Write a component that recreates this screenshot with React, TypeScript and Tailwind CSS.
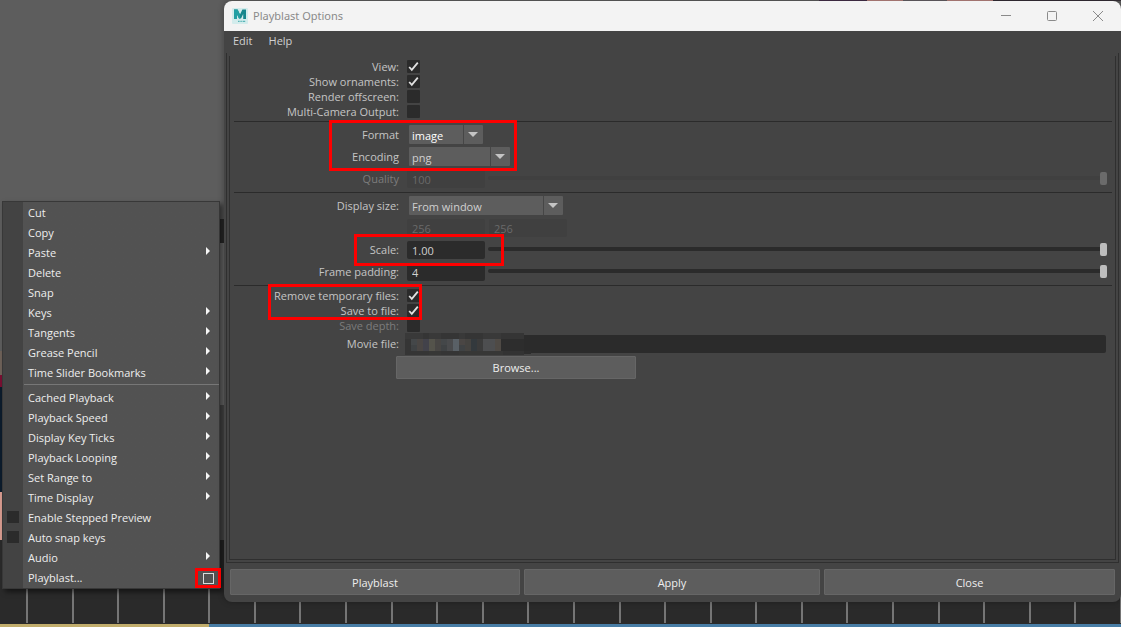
import { useState } from "react";
import type { ReactNode } from "react";

type MenuEntry = {
  label: string;
  submenu?: boolean;
  checkbox?: boolean;
  optionBox?: boolean;
};

const editItems: MenuEntry[] = [
  { label: "Cut" },
  { label: "Copy" },
  { label: "Paste", submenu: true },
  { label: "Delete" },
  { label: "Snap" },
  { label: "Keys", submenu: true },
  { label: "Tangents", submenu: true },
  { label: "Grease Pencil", submenu: true },
  { label: "Time Slider Bookmarks", submenu: true },
];

const playbackItems: MenuEntry[] = [
  { label: "Cached Playback", submenu: true },
  { label: "Playback Speed", submenu: true },
  { label: "Display Key Ticks", submenu: true },
  { label: "Playback Looping", submenu: true },
  { label: "Set Range to", submenu: true },
  { label: "Time Display", submenu: true },
  { label: "Enable Stepped Preview", checkbox: true },
  { label: "Auto snap keys", checkbox: true },
  { label: "Audio", submenu: true },
  { label: "Playblast...", optionBox: true },
];

const ticks = Array.from({ length: 25 }, (_, i) => i);

const MayaIcon = () => (
  <svg viewBox="0 0 16 16" className="w-4 h-4 shrink-0" aria-hidden="true">
    <rect width="16" height="16" rx="1" fill="#d3ecec" />
    <path d="M2 1.5h3.6L8 6.6l2.4-5.1H14v9.6h-2.8V6L9 10.6H7L4.8 6v5.1H2z" fill="#16868c" />
    <path d="M2 1.5h3.6L8 6.6v4H7L4.8 6v5.1H2z" fill="#23a0a4" />
    <path d="M6 13.4h1.6M8.4 13.4h1.4M10.6 13.4h2.6" stroke="#58b4b6" strokeWidth="1.4" />
  </svg>
);

const MenuItem = ({ item }: { item: MenuEntry }) => (
  <li className="relative flex h-5">
    {item.checkbox ? (
      <label className="flex flex-1 items-center">
        <input
          type="checkbox"
          className="appearance-none w-3 h-3 ml-1 mr-[9px] mb-0.5 bg-[#2b2b2b] checked:bg-[#5285a6]"
        />
        {item.label}
      </label>
    ) : (
      <button className="flex flex-1 items-center pl-[25px] text-left hover:bg-[#5285a6]">
        {item.label}
      </button>
    )}
    {item.submenu && (
      <svg viewBox="0 0 4 8" className="absolute right-[9px] top-1 w-1 h-2" aria-hidden="true">
        <path d="M0 0l4 4-4 4z" fill="#f5f5f5" />
      </svg>
    )}
    {item.optionBox && (
      <button
        aria-label="Playblast options"
        className="absolute -right-0.5 top-0 flex w-[26px] h-5 items-center justify-center border-[3px] border-[#fe0000]"
      >
        <span className="w-[11px] h-[11px] border border-[#dcdcdc]" />
      </button>
    )}
  </li>
);

const ContextMenu = () => (
  <div className="absolute left-0.5 bottom-[38px] w-[218px] border border-[#383838] pt-px text-[#eeeeee] shadow-[3px_3px_5px_rgba(0,0,0,0.5)] bg-linear-to-r from-[#434343] from-[20px] to-[#525252] to-[20px]">
    <ul>
      {editItems.map((item) => (
        <MenuItem key={item.label} item={item} />
      ))}
    </ul>
    <hr className="mt-px mb-[3px] ml-[21px] border-[#777777]" />
    <ul>
      {playbackItems.map((item) => (
        <MenuItem key={item.label} item={item} />
      ))}
    </ul>
  </div>
);

const Row = ({
  label,
  htmlFor,
  dim,
  children,
}: {
  label: string;
  htmlFor?: string;
  dim?: boolean;
  children: ReactNode;
}) => (
  <div className="flex h-[19px] items-center gap-2">
    <label
      htmlFor={htmlFor}
      className={`w-[165px] shrink-0 text-right ${dim ? "text-[#7c7c7c]" : "text-[#c4c4c4]"}`}
    >
      {label}
    </label>
    {children}
  </div>
);

const CheckRow = ({
  id,
  label,
  checked = false,
  disabled,
}: {
  id: string;
  label: string;
  checked?: boolean;
  disabled?: boolean;
}) => (
  <div className="flex h-[15px] gap-2">
    <label
      htmlFor={id}
      className={`w-[165px] shrink-0 text-right leading-[13px] ${
        disabled ? "text-[#7c7c7c]" : "text-[#c4c4c4]"
      }`}
    >
      {label}
    </label>
    <span className="grid w-[13px] h-[13px]">
      <input
        id={id}
        type="checkbox"
        defaultChecked={checked}
        disabled={disabled}
        className="peer appearance-none col-start-1 row-start-1 rounded-[1px] bg-[#2b2b2b]"
      />
      <svg
        viewBox="0 0 13 13"
        className="hidden peer-checked:block col-start-1 row-start-1 pointer-events-none"
        aria-hidden="true"
      >
        <path d="M2.2 7l2.6 2.8 6-7.2" fill="none" stroke="#e0e0e0" strokeWidth="1.8" />
      </svg>
    </span>
  </div>
);

const Combo = ({
  id,
  options,
  width,
  active,
}: {
  id: string;
  options: string[];
  width: string;
  active?: boolean;
}) => (
  <span className={`grid h-[19px] ml-0.5 ${width}`}>
    <select
      id={id}
      className={`appearance-none col-start-1 row-start-1 rounded-[1px] bg-[#5d5d5d] pl-[3px] pt-0.5 ${
        active ? "text-white" : "text-[#d0d0d0]"
      }`}
    >
      {options.map((option) => (
        <option key={option}>{option}</option>
      ))}
    </select>
    <span className="col-start-1 row-start-1 justify-self-end flex w-5 items-center justify-center border-l border-[#464646] pr-px pointer-events-none">
      <svg viewBox="0 0 10 5" className="w-2.5 h-[5px]" aria-hidden="true">
        <path d="M0 0h10L5 5z" fill="#c4c4c4" />
      </svg>
    </span>
  </span>
);

const NumberField = ({
  id,
  value,
  disabled,
  name,
}: {
  id: string;
  value: string;
  disabled?: boolean;
  name?: string;
}) => (
  <input
    id={id}
    type="text"
    aria-label={name}
    defaultValue={value}
    disabled={disabled}
    className="w-[78px] h-[18px] shrink-0 rounded-[2px] bg-[#2b2b2b] pl-[5px] pt-0.5 text-[#d0d0d0] disabled:bg-[#404040] disabled:text-[#6a6a6a]"
  />
);

const Slider = ({ name, disabled }: { name: string; disabled?: boolean }) => (
  <input
    type="range"
    aria-label={name}
    defaultValue={100}
    disabled={disabled}
    className="appearance-none flex-1 min-w-0 h-[13px] -ml-[5px] mr-[5px] mb-0.5 bg-transparent [&::-webkit-slider-runnable-track]:h-1 [&::-webkit-slider-runnable-track]:rounded-[2px] [&::-webkit-slider-runnable-track]:bg-[#2b2b2b] disabled:[&::-webkit-slider-runnable-track]:bg-[#404040] [&::-webkit-slider-thumb]:appearance-none [&::-webkit-slider-thumb]:w-[7px] [&::-webkit-slider-thumb]:h-[13px] [&::-webkit-slider-thumb]:-mt-1 [&::-webkit-slider-thumb]:rounded-[2px] [&::-webkit-slider-thumb]:bg-[#bdbdbd] disabled:[&::-webkit-slider-thumb]:bg-[#6b6b6b]"
  />
);

const Divider = () => <hr className="border-[#2b2b2b]" />;

// pixelated cover over the file path
const Mosaic = () => (
  <svg
    viewBox="0 0 126 22"
    className="absolute left-0 -top-0.5 w-[126px] h-[22px]"
    shapeRendering="crispEdges"
    aria-hidden="true"
  >
    <path d="M0 0h119v18h7v3h-7v1H0z" fill="#2d2d2d" />
    <path d="M0 0h18v6H0zM24 0h12v6H24zM54 0h6v6h-6zM78 0h18v6H78z" fill="#393939" />
    <path d="M18 0h6v6h-6zM36 0h18v6H36zM60 0h18v6H60zM96 0h23v6H96z" fill="#353535" />
    <path d="M0 6h6v12H0zM0 18h24v4H0zM36 18h18v4H36z" fill="#353535" />
    <path d="M24 18h12v4H24zM54 18h24v4H54zM78 18h20v4H78z" fill="#373736" />
    <path d="M98 18h21v4H98z" fill="#333333" />
    <path d="M6 6h6v12H6zM36 6h6v12h-6z" fill="#444749" />
    <path d="M12 6h6v12h-6zM54 6h6v12h-6z" fill="#4a4644" />
    <path d="M18 6h6v12h-6z" fill="#42424a" />
    <path d="M24 6h6v12h-6z" fill="#54534b" />
    <path d="M30 6h6v12h-6z" fill="#484644" />
    <path d="M42 6h6v12h-6z" fill="#4a4b4d" />
    <path d="M48 6h6v12h-6z" fill="#596066" />
    <path d="M60 6h6v12h-6z" fill="#454340" />
    <path d="M66 6h6v12h-6z" fill="#33393d" />
    <path d="M72 6h6v12h-6z" fill="#3b3b3b" />
    <path d="M78 6h12v12H78z" fill="#4d4e50" />
    <path d="M90 6h6v12h-6z" fill="#4f4a45" />
    <path d="M6 12h6v6H6zM36 12h6v6h-6zM54 12h6v6h-6z" fill="#3f4244" />
  </svg>
);

const pushButton =
  "bg-[#5d5d5d] border border-[#666666] rounded-[1px] text-[#eeeeee] hover:bg-[#6a6a6a] active:bg-[#333333]";

const PlayblastOptions = () => {
  const [path, setPath] = useState("");

  return (
    <section className="absolute left-56 right-0 top-px bottom-[25px] flex flex-col rounded-lg overflow-hidden bg-[#444444] shadow-[0_0_6px_rgba(0,0,0,0.3)]">
      <header className="flex h-[30px] shrink-0 items-center bg-[#f3f3f3] pl-2 text-[#8a8a8a]">
        <MayaIcon />
        <h1 className="flex-1 pl-[5px] font-['Noto_Sans',sans-serif] text-[11px]">Playblast Options</h1>
        <button aria-label="Minimize" className="flex w-[46px] h-full items-center justify-center">
          <svg viewBox="0 0 10 10" className="w-2.5 h-2.5" aria-hidden="true">
            <path d="M0 4.5h10" stroke="#8a8a8a" />
          </svg>
        </button>
        <button aria-label="Maximize" className="flex w-[46px] h-full items-center justify-center">
          <svg viewBox="0 0 10 10" className="w-2.5 h-2.5" aria-hidden="true">
            <rect x=".5" y=".5" width="9" height="9" rx="1" fill="none" stroke="#8a8a8a" />
          </svg>
        </button>
        <button aria-label="Close window" className="flex w-[46px] h-full items-center justify-center">
          <svg viewBox="0 0 10 10" className="w-2.5 h-2.5" aria-hidden="true">
            <path d="M0 0l10 10M10 0L0 10" stroke="#8a8a8a" />
          </svg>
        </button>
      </header>

      <nav className="flex h-[22px] shrink-0 gap-4 pl-[9px] text-[#d0d0d0]">
        <button className="h-5">Edit</button>
        <button className="h-5">Help</button>
      </nav>

      <div className="flex flex-1 flex-col min-h-0 mx-0.5 border border-t-0 border-[#2f2f2f] px-0.5 pb-0.5 pt-[3px]">
        <form
          className="flex-1 min-h-0 border border-t-0 border-[#2f2f2f] pt-1 pl-1 pr-[3px]"
          onSubmit={(e) => e.preventDefault()}
        >
          <div className="pb-px">
            <CheckRow id="view" label="View:" checked />
            <CheckRow id="ornaments" label="Show ornaments:" checked />
            <CheckRow id="offscreen" label="Render offscreen:" />
            <CheckRow id="multicam" label="Multi-Camera Output:" />
          </div>
          <Divider />

          <div className="relative flex flex-col gap-[3px] pt-[3px] pb-1">
            <Row label="Format" htmlFor="format">
              <Combo id="format" options={["image", "avi", "qt"]} width="w-[74px]" active />
            </Row>
            <Row label="Encoding" htmlFor="encoding">
              <Combo id="encoding" options={["png", "jpg", "tif"]} width="w-[101px]" />
            </Row>
            <Row label="Quality" htmlFor="quality" dim>
              <NumberField id="quality" value="100" disabled />
              <Slider name="Quality" disabled />
            </Row>
            <div className="absolute left-[95px] -top-0.5 w-[188px] h-[51px] border-[3px] border-[#fe0000] pointer-events-none" />
          </div>
          <Divider />

          <div className="flex flex-col gap-[3px] pt-[3px] pb-1">
            <Row label="Display size:" htmlFor="size">
              <Combo id="size" options={["From window", "From Render Settings", "Custom"]} width="w-[154px]" />
            </Row>
            <Row label="">
              <div className="flex gap-1">
                <NumberField id="width" name="Width" value="256" disabled />
                <NumberField id="height" name="Height" value="256" disabled />
              </div>
            </Row>
            <div className="relative">
              <Row label="Scale:" htmlFor="scale">
                <NumberField id="scale" value="1.00" />
                <Slider name="Scale" />
              </Row>
              <div className="absolute left-[120px] -top-1.5 w-[150px] h-8 border-[3px] border-[#fe0000] pointer-events-none" />
            </div>
            <Row label="Frame padding:" htmlFor="padding">
              <NumberField id="padding" value="4" />
              <Slider name="Frame padding" />
            </Row>
          </div>
          <Divider />

          <div className="relative pt-[3px]">
            <CheckRow id="temporary" label="Remove temporary files:" checked />
            <CheckRow id="save" label="Save to file:" checked />
            <CheckRow id="depth" label="Save depth:" disabled />
            <div className="absolute left-[34px] -top-0.5 w-[154px] h-9 border-[3px] border-[#fe0000] pointer-events-none" />
          </div>

          <Row label="Movie file:" htmlFor="movie">
            <div className="relative flex-1 -ml-0.5 mr-1.5 h-[18px]">
              <input
                id="movie"
                type="text"
                value={path}
                onChange={(e) => setPath(e.target.value)}
                className="block w-full h-full rounded-[2px] bg-[#2b2b2b] pl-[5px] text-[#d0d0d0]"
              />
              <Mosaic />
            </div>
          </Row>
          <button className={`block w-60 h-[23px] mt-[3px] ml-[162px] ${pushButton}`}>Browse...</button>
        </form>
      </div>

      <footer className="grid grid-cols-[290fr_296fr_291fr] shrink-0 gap-1 pt-1.5 pb-[7px] pl-1.5 pr-1.5">
        <button className={`h-[26px] pt-0.5 ${pushButton}`}>Playblast</button>
        <button className={`h-[26px] pt-0.5 ${pushButton}`}>Apply</button>
        <button className={`h-[26px] pt-0.5 ${pushButton}`}>Close</button>
      </footer>
    </section>
  );
};

export default function App() {
  return (
    <main className="relative flex flex-col min-h-screen overflow-hidden bg-[#5d5d5d] font-['Open_Sans',sans-serif] text-[11px] leading-4">
      {/* viewport */}
      <div className="flex flex-1">
        <div className="flex w-0.5 flex-col justify-end">
          <span className="h-6 bg-[#6f6259]" />
          <span className="h-3 bg-[#7a0f32]" />
          <span className="h-[105px] bg-[#0c1c2c]" />
          <span className="h-12 bg-[#d99c90]" />
        </div>
        <div className="flex w-[222px] flex-col justify-end items-end">
          <span className="w-1 h-6 bg-[#2f2f2f]" />
          <span className="w-1 h-[162px] bg-[#767676]" />
          <span className="w-1 h-[135px] bg-[#505050]" />
        </div>
        <div className="flex flex-1 justify-end h-px">
          <span className="w-12 bg-[#44304a]" />
          <span className="w-9 bg-[#b98580]" />
          <span className="w-11 bg-[#666066]" />
          <span className="w-[46px] bg-[#b98580]" />
          <span className="w-[128px] bg-[#352f36]" />
        </div>
      </div>

      {/* time slider */}
      <div className="flex h-[84px] justify-between bg-[#2a2a2a] pl-[26px] pb-px -mr-px">
        {ticks.map((tick) => (
          <span key={tick} className="w-0.5 bg-[#757575]" />
        ))}
      </div>
      <div className="flex h-[3px]">
        <span className="w-[209px] bg-[#c1ad6c]" />
        <span className="flex-1 bg-[#487da5]" />
      </div>

      <ContextMenu />
      <PlayblastOptions />
    </main>
  );
}
